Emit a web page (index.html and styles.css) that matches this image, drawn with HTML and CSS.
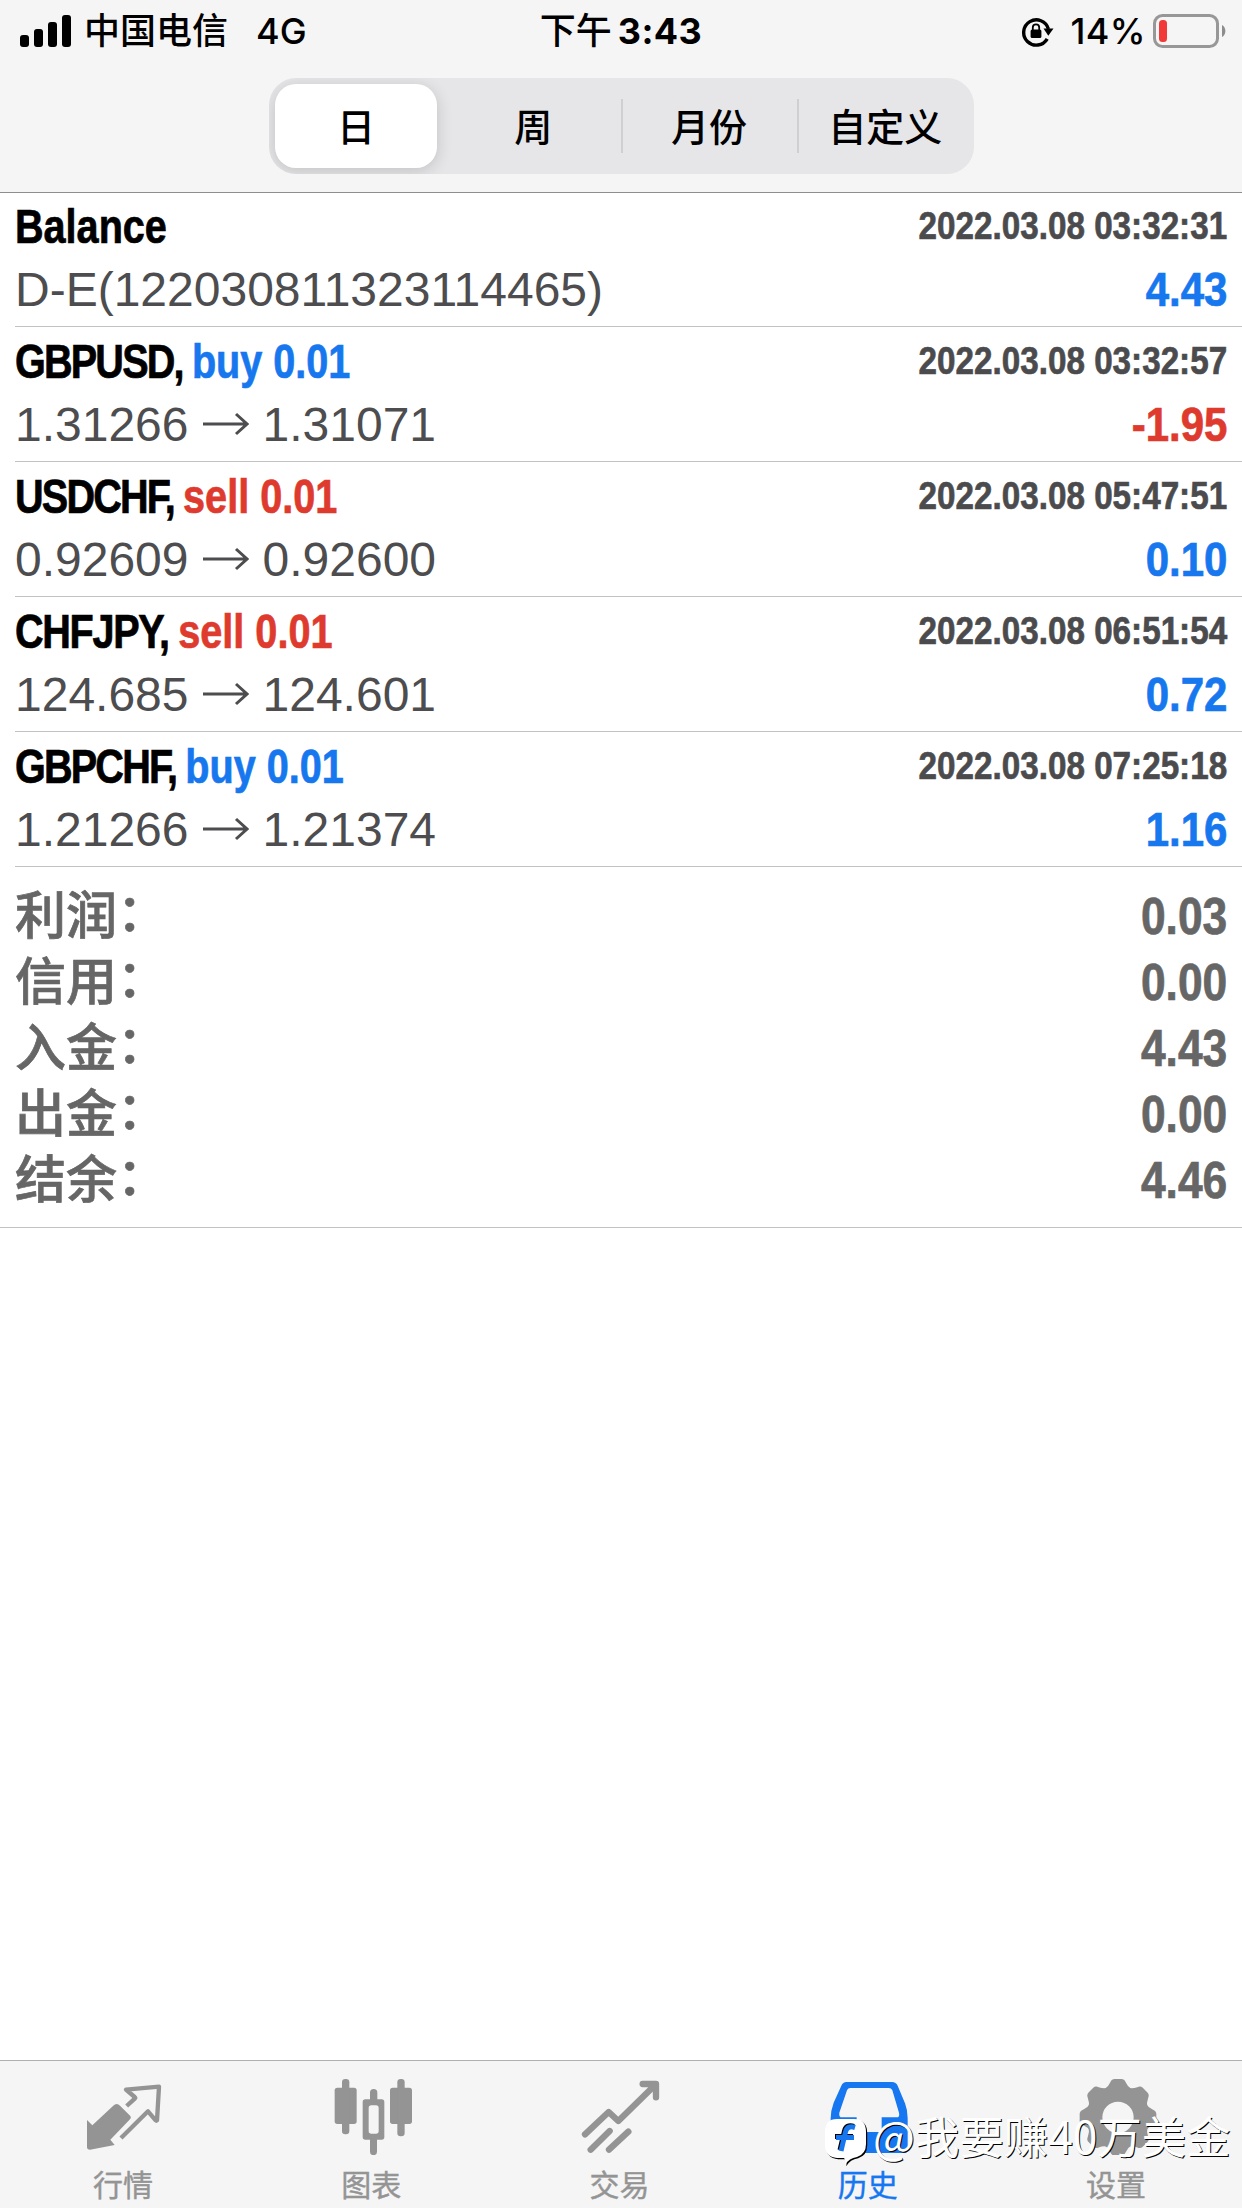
FILE: index.html
```html
<!DOCTYPE html>
<html lang="zh-CN">
<head>
<meta charset="utf-8">
<title>历史</title>
<link rel="stylesheet" href="styles.css">
</head>
<body>
<div class="app">
  <header class="top">
    <div class="status">
      <div class="status-left">
        <svg class="signal" width="52" height="32" viewBox="0 0 52 32"><rect x="0" y="20" width="9" height="12" rx="3"/><rect x="14" y="14" width="9" height="18" rx="3"/><rect x="28" y="7" width="9" height="25" rx="3"/><rect x="42" y="0" width="9" height="32" rx="3"/></svg>
        <span class="carrier">中国电信</span><span class="net">4G</span>
      </div>
      <div class="clock"><span class="ampm">下午</span><span class="time">3:43</span></div>
      <div class="status-right">
        <svg class="lock" width="34" height="32" viewBox="0 0 34 32"><path d="M26.2 23.8A12.6 12.6 0 1 1 27.4 14" fill="none" stroke="#000" stroke-width="3.4"/><path d="M22.5 13.5h10l-5.2 7.2z"/><rect x="9.6" y="14.6" width="10.8" height="8.4" rx="1.5"/><path d="M11.8 15v-2.4a3.2 3.2 0 0 1 6.4 0V15" fill="none" stroke="#000" stroke-width="1.8"/></svg>
        <span class="percent">14%</span>
        <svg class="battery" width="74" height="34" viewBox="0 0 74 34"><rect x="1.5" y="1.5" width="63" height="31" rx="8" fill="none" stroke="#979797" stroke-width="3"/><rect x="6" y="6" width="8" height="22" rx="3.5" fill="#f13a38"/><path d="M69 11a7 7 0 0 1 0 12z" fill="#8c8c8c"/></svg>
      </div>
    </div>
    <nav class="segments">
      <span class="seg active">日</span><span class="seg">周</span><span class="seg ruled">月份</span><span class="seg ruled">自定义</span>
    </nav>
  </header>

  <main class="list">
    <section class="deal">
      <div class="line head"><span class="symbol">Balance</span><span class="date">2022.03.08 03:32:31</span></div>
      <div class="line body"><span class="detail">D-E(122030811323114465)</span><span class="amount up">4.43</span></div>
    </section>
    <section class="deal">
      <div class="line head"><span class="symbol"><span class="pair">GBPUSD, </span><span class="buy">buy 0.01</span></span><span class="date">2022.03.08 03:32:57</span></div>
      <div class="line body"><span class="detail">1.31266<svg class="arrow" viewBox="0 0 46 24"><path d="M0 12h44M33 2l11 10-11 10"/></svg>1.31071</span><span class="amount down">-1.95</span></div>
    </section>
    <section class="deal">
      <div class="line head"><span class="symbol"><span class="pair">USDCHF, </span><span class="sell">sell 0.01</span></span><span class="date">2022.03.08 05:47:51</span></div>
      <div class="line body"><span class="detail">0.92609<svg class="arrow" viewBox="0 0 46 24"><path d="M0 12h44M33 2l11 10-11 10"/></svg>0.92600</span><span class="amount up">0.10</span></div>
    </section>
    <section class="deal">
      <div class="line head"><span class="symbol"><span class="pair loose">CHFJPY, </span><span class="sell">sell 0.01</span></span><span class="date">2022.03.08 06:51:54</span></div>
      <div class="line body"><span class="detail">124.685<svg class="arrow" viewBox="0 0 46 24"><path d="M0 12h44M33 2l11 10-11 10"/></svg>124.601</span><span class="amount up">0.72</span></div>
    </section>
    <section class="deal">
      <div class="line head"><span class="symbol"><span class="pair">GBPCHF, </span><span class="buy">buy 0.01</span></span><span class="date">2022.03.08 07:25:18</span></div>
      <div class="line body"><span class="detail">1.21266<svg class="arrow" viewBox="0 0 46 24"><path d="M0 12h44M33 2l11 10-11 10"/></svg>1.21374</span><span class="amount up">1.16</span></div>
    </section>
  </main>

  <section class="summary">
    <div class="sum"><span class="label">利润<span class="colon">：</span></span><span class="value">0.03</span></div>
    <div class="sum"><span class="label">信用<span class="colon">：</span></span><span class="value">0.00</span></div>
    <div class="sum"><span class="label">入金<span class="colon">：</span></span><span class="value">4.43</span></div>
    <div class="sum"><span class="label">出金<span class="colon">：</span></span><span class="value">0.00</span></div>
    <div class="sum"><span class="label">结余<span class="colon">：</span></span><span class="value">4.46</span></div>
  </section>

  <footer class="tabs">
    <div class="tab">
      <svg class="icon" viewBox="102 75 240 240"><path d="M111 210l16 16 62-58q11-11 21-1l31 31q4 5-1 10l-59 61 13 16-74 14q-9 0-9-7z"/><path class="stroke" stroke-width="13" stroke-linejoin="round" d="M230 168l25-23q2-2-1-4l-26-22 99-9-6 101q-2 2-4 0l-23-27-81 80"/></svg>
      <span>行情</span>
    </div>
    <div class="tab">
      <svg class="icon" viewBox="846 75 240 240"><rect x="854" y="113" width="66" height="109" rx="8"/><rect x="876" y="87" width="22" height="166" rx="10"/><rect x="1020" y="113" width="66" height="109" rx="8"/><rect x="1042" y="87" width="22" height="172" rx="10"/><path fill-rule="evenodd" d="M946 148h14v-20a10 10 0 0 1 22 0v20h13q8 0 8 8v105q0 8-8 8h-14v36a10 10 0 0 1-21 0v-36h-14q-8 0-8-8V156q0-8 8-8zm18 18q-8 0-8 8v69q0 8 8 8h14q8 0 8-8v-69q0-8-8-8z"/></svg>
      <span>图表</span>
    </div>
    <div class="tab">
      <svg class="icon" viewBox="90 75 240 240"><path class="stroke" stroke-width="19" stroke-linecap="round" stroke-linejoin="round" d="M105 253l71-67 29 27L316 104M278 102h40v40M122 299l57-56M177 299l58-54"/></svg>
      <span>交易</span>
    </div>
    <div class="tab current">
      <svg class="icon" viewBox="85 75 240 240"><path fill-rule="evenodd" d="M137 96H274Q286 96 291 107L313 160Q321 180 321 205V299Q321 309 311 309H100Q90 309 90 299V205Q90 182 99 158L122 107Q127 96 137 96zM149 114Q142 114 139 121L116 188Q114 202 124 202H168V236Q168 246 178 246H233Q243 246 243 236V202H288Q298 202 295 188L275 121Q272 114 264 114z"/></svg>
      <span>历史</span>
    </div>
    <div class="tab">
      <svg class="icon" viewBox="829 75 240 240"><defs><path id="tooth" d="M911 118q12-7 18-21 4-10 13-10h20q9 0 13 10 6 14 18 21z"/></defs><circle cx="952" cy="202" r="70" class="stroke" stroke-width="46"/><use href="#tooth"/><use href="#tooth" transform="rotate(45 952 202)"/><use href="#tooth" transform="rotate(90 952 202)"/><use href="#tooth" transform="rotate(135 952 202)"/><use href="#tooth" transform="rotate(180 952 202)"/><use href="#tooth" transform="rotate(225 952 202)"/><use href="#tooth" transform="rotate(270 952 202)"/><use href="#tooth" transform="rotate(315 952 202)"/></svg>
      <span>设置</span>
    </div>
  </footer>

  <div class="watermark">
    <svg class="bubble" width="46" height="52" viewBox="0 0 46 52"><path d="M14 3H31Q43 3 43 16V28Q43 38 34 41 26 42 22 49 23 44 21 42H14Q2 41 2 29V16Q2 3 14 3z" fill="#000" transform="translate(1.2 1.2)"/><path d="M14 3H31Q43 3 43 16V28Q43 38 34 41 26 42 22 49 23 44 21 42H14Q2 41 2 29V16Q2 3 14 3z" fill="#fff"/><path d="M31 10.500Q23 8 21.500 15L17 34M12 20.500h18" fill="none" stroke="#000" stroke-width="5"/><path d="M32 11.500Q24 9 22.500 16L18 35M13 21.500h18" fill="none" stroke="#1677f0" stroke-width="5"/></svg>
    <span>@我要赚40万美金</span>
  </div>
</div>
</body>
</html>
```

FILE: styles.css
```css
* { box-sizing: border-box; }
body { margin: 0; background: #fff; }
.app {
  position: relative;
  display: flex;
  flex-direction: column;
  width: 1242px;
  height: 2208px;
  overflow: hidden;
  font-family: "Liberation Sans", "Noto Sans CJK SC", sans-serif;
  color: #000;
}

.top {
  flex: none;
  height: 193px;
  background: #f5f5f5;
  border-bottom: 1px solid #8e8e8e;
}
.status {
  display: grid;
  grid-template-columns: 1fr auto 1fr;
  align-items: center;
  height: 78px;
  padding: 0 15px 16px 20px;
  font: 500 36px/62px Inter, "Noto Sans CJK SC", sans-serif;
}
.status-left, .status-right, .clock { display: flex; align-items: center; }
.status-right { justify-content: flex-end; }
.carrier { margin-left: 12px; }
.net { margin-left: 28px; }
.clock { margin-right: 5px; }
.time { margin-left: 6px; font-weight: 700; letter-spacing: .4px; }
.percent { margin: 0 7px 0 15px; letter-spacing: .4px; }

.segments {
  display: grid;
  grid-template-columns: repeat(4, 1fr);
  width: 705px;
  height: 96px;
  margin: 0 auto 0 269px;
  background: #e6e6e8;
  border-radius: 27px;
  overflow: hidden;
}
.seg {
  display: flex;
  align-items: center;
  justify-content: center;
  padding-bottom: 3px;
  font: 500 38px/80px "Noto Sans CJK SC", sans-serif;
}
.seg.active {
  margin: 6px 8px 6px 6px;
  background: #fff;
  border-radius: 21px;
  box-shadow: 0 3px 16px rgba(0, 0, 0, .16);
}
.seg.ruled {
  margin-left: -1px;
  background: linear-gradient(#cfcfd2, #cfcfd2) left center / 2px 54px no-repeat;
}

.list { flex: none; padding-left: 15px; }
.deal { height: 135px; border-bottom: 1px solid #c2c2c4; padding-right: 15px; }
.line { display: flex; justify-content: space-between; align-items: baseline; }
.head { height: 68px; padding-top: 1px; line-height: 68px; }
.body { height: 60px; line-height: 60px; }
.deal:first-child { height: 134px; }
.deal:first-child .head { height: 67px; padding-top: 0; }

/* Condensed bold faces */
.symbol, .date, .amount, .value {
  font-weight: 700;
  white-space: pre;
  -webkit-text-stroke: .7px currentColor;
}
.symbol { font-size: 48px; transform: scaleX(.825); transform-origin: left; }
.pair { letter-spacing: -2.2px; }
.pair.loose { letter-spacing: -1.6px; }
.date {
  font-size: 39px;
  color: #4b4b4e;
  transform: translateY(-4px) scaleX(.852);
  transform-origin: right;
}
.detail { font-size: 48px; color: #4d4d4f; }
.arrow {
  width: 46px;
  height: 24px;
  margin: 0 14px;
  vertical-align: 5px;
  fill: none;
  stroke: #4d4d4f;
  stroke-width: 3;
}
.amount { font-size: 48px; transform: scaleX(.875); transform-origin: right; }
.buy, .up { color: #1677ee; }
.sell, .down { color: #de3a2e; }

.summary {
  flex: none;
  height: 361px;
  padding: 12px 15px 0;
  border-bottom: 1px solid #c2c2c4;
  color: #666;
}
.sum { display: flex; justify-content: space-between; align-items: baseline; height: 66px; line-height: 66px; }
.label { font: 500 51px/66px "Noto Sans CJK SC", sans-serif; -webkit-text-stroke: .7px currentColor; }
.colon { position: relative; top: -3px; }
.value { font-size: 51px; transform: scaleX(.87); transform-origin: right; }

.tabs {
  flex: none;
  display: grid;
  grid-template-columns: repeat(5, 1fr);
  height: 148px;
  margin-top: auto;
  padding-right: 1px;
  background: #f5f5f5;
  border-top: 1px solid #b0b0b0;
}
.tab {
  display: flex;
  flex-direction: column;
  align-items: center;
  padding-top: 14px;
  color: #949494;
  font: 400 30px/44px "Noto Sans CJK SC", sans-serif;
}
.tab.current { color: #1677f0; }
.icon { width: 80px; height: 80px; fill: currentColor; }
.icon .stroke { fill: none; stroke: currentColor; }
.tab span { margin: 6px 2px 0 0; -webkit-text-stroke: .4px currentColor; }

.watermark {
  position: absolute;
  left: 823px;
  top: 2116px;
  display: flex;
  align-items: flex-start;
  color: #fff;
  font: 400 44.4px/38px "Noto Sans CJK SC", sans-serif;
  text-shadow: 1px 1px 0 #000;
  white-space: nowrap;
}
.bubble { margin-right: 4px; }
```
